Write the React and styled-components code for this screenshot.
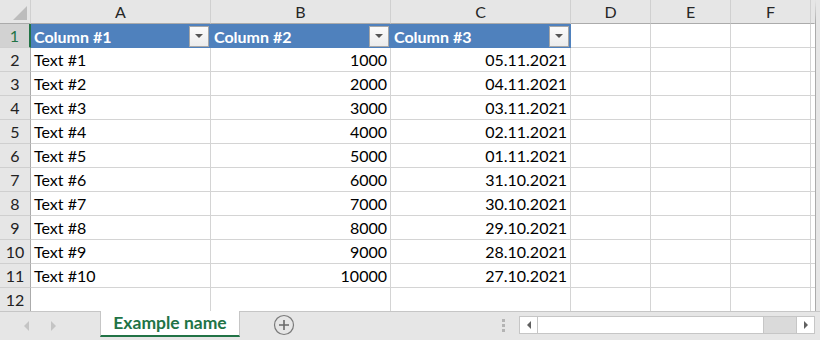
import React from "react";
import styled, { createGlobalStyle } from "styled-components";

const GlobalStyle = createGlobalStyle`
  html, body {
    margin: 0;
    padding: 0;
    background: #ffffff;
  }
  body {
    font-family: Lato, "Open Sans", "Liberation Sans", sans-serif;
    color: #000;
  }
`;

const Window = styled.div`
  width: 820px;
  height: 340px;
  display: flex;
  flex-direction: column;
  overflow: hidden;
  background: #ffffff;
`;

const SheetArea = styled.div`
  display: flex;
  height: 312px;
`;

const Grid = styled.div`
  display: grid;
  grid-template-columns: 31px 180px 180px 180px 80px 80px 80px 4px;
  grid-auto-rows: 24px;
  width: 815px;
`;

const VScroll = styled.div`
  width: 5px;
  border-left: 1px solid #ababab;
  border-top: 23px solid #e6e6e6;
  background: #e6e6e6;
  box-sizing: border-box;
`;

const Corner = styled.div`
  position: relative;
  background: #e6e6e6;
  border-right: 1px solid #d0d0d0;
  border-bottom: 1px solid #ababab;
  box-sizing: border-box;

  &::after {
    content: "";
    position: absolute;
    right: 3px;
    bottom: 3px;
    width: 0;
    height: 0;
    border-left: 14px solid transparent;
    border-bottom: 14px solid #bdbdbd;
  }
`;

const ColHead = styled.div`
  display: flex;
  align-items: center;
  justify-content: center;
  background: #e6e6e6;
  color: #262626;
  font-size: 16px;
  border-right: 1px solid ${(p) => (p.$last ? "#e6e6e6" : "#d0d0d0")};
  border-bottom: 1px solid #ababab;
  box-sizing: border-box;
`;

const RowHead = styled.div`
  display: flex;
  align-items: center;
  justify-content: center;
  font-size: 16px;
  background: ${(p) => (p.$active ? "#d2d2d2" : "#e6e6e6")};
  color: ${(p) => (p.$active ? "#217346" : "#222")};
  border-right: ${(p) => (p.$active ? "2px solid #217346" : "1px solid #ababab")};
  border-bottom: 1px solid #cfcfcf;
  box-sizing: border-box;
`;

const Cell = styled.div`
  display: flex;
  align-items: center;
  justify-content: ${(p) => (p.$right ? "flex-end" : "flex-start")};
  padding: 0 3px 0 3px;
  font-size: 16px;
  color: #000;
  border-right: 1px solid ${(p) => (p.$filler ? "#fff" : "#d4d4d4")};
  border-bottom: 1px solid #d4d4d4;
  box-sizing: border-box;
  white-space: nowrap;
`;

const TableHead = styled.div`
  display: flex;
  align-items: center;
  justify-content: space-between;
  padding: 0 1px 0 3px;
  background: #4f81bd;
  color: #ffffff;
  font-weight: 700;
  font-size: 16px;
  border-right: 1px solid #4f81bd;
  box-sizing: border-box;
`;

const FilterButton = styled.div`
  width: 20px;
  height: 21px;
  box-sizing: border-box;
  border: 1px solid #a6a6a6;
  background: linear-gradient(#fbfbfb, #ececec);
  display: flex;
  align-items: center;
  justify-content: center;

  &::after {
    content: "";
    width: 0;
    height: 0;
    border-left: 4px solid transparent;
    border-right: 4px solid transparent;
    border-top: 4px solid #555;
  }
`;

const TabBar = styled.div`
  flex: 1;
  display: flex;
  align-items: flex-start;
  background: #e6e6e6;
  border-top: 1px solid #c6c6c6;
  margin-top: -1px;
`;

const NavArea = styled.div`
  width: 100px;
  height: 27px;
  display: flex;
  align-items: center;
  gap: 22px;
  padding-left: 24px;
  box-sizing: border-box;
`;

const NavArrow = styled.div`
  width: 0;
  height: 0;
  border-top: 5px solid transparent;
  border-bottom: 5px solid transparent;
  ${(p) =>
    p.$dir === "left"
      ? "border-right: 5px solid #c4c4c4;"
      : "border-left: 5px solid #c4c4c4;"}
`;

const Tab = styled.div`
  width: 140px;
  height: 26px;
  margin-top: -1px;
  box-sizing: border-box;
  background: #ffffff;
  border-left: 1px solid #c6c6c6;
  border-right: 1px solid #c6c6c6;
  border-bottom: 2px solid #217346;
  color: #217346;
  font-weight: 700;
  font-size: 17.5px;
  display: flex;
  align-items: center;
  justify-content: center;
  padding-bottom: 2px;
`;

const AddSheet = styled.div`
  margin-left: 33px;
  margin-top: 2px;
  width: 22px;
  height: 22px;
  display: flex;
`;

const Spacer = styled.div`
  flex: 1;
`;

const Grip = styled.div`
  display: flex;
  flex-direction: column;
  gap: 2px;
  margin-top: 7px;
  margin-right: 14px;

  & > span {
    width: 3px;
    height: 3px;
    background: #b4b4b4;
  }
`;

const HScroll = styled.div`
  width: 296px;
  height: 18px;
  margin-top: 4px;
  margin-right: 5px;
  display: flex;
  background: #dadada;
  border: 1px solid #c6c6c6;
  box-sizing: border-box;
`;

const ScrollBtn = styled.div`
  width: 18px;
  height: 100%;
  box-sizing: border-box;
  background: #ffffff;
  border-${(p) => (p.$dir === "left" ? "right" : "left")}: 1px solid #c6c6c6;
  display: flex;
  align-items: center;
  justify-content: center;

  &::after {
    content: "";
    width: 0;
    height: 0;
    border-top: 4px solid transparent;
    border-bottom: 4px solid transparent;
    ${(p) =>
      p.$dir === "left"
        ? "border-right: 4px solid #606060;"
        : "border-left: 4px solid #606060;"}
  }
`;

const Thumb = styled.div`
  width: 226px;
  height: 100%;
  background: #ffffff;
  border-right: 1px solid #c6c6c6;
  box-sizing: border-box;
`;

const Track = styled.div`
  flex: 1;
`;

const columns = ["A", "B", "C", "D", "E", "F"];

const rows = [
  ["Text #1", "1000", "05.11.2021"],
  ["Text #2", "2000", "04.11.2021"],
  ["Text #3", "3000", "03.11.2021"],
  ["Text #4", "4000", "02.11.2021"],
  ["Text #5", "5000", "01.11.2021"],
  ["Text #6", "6000", "31.10.2021"],
  ["Text #7", "7000", "30.10.2021"],
  ["Text #8", "8000", "29.10.2021"],
  ["Text #9", "9000", "28.10.2021"],
  ["Text #10", "10000", "27.10.2021"],
];

function PlusIcon() {
  return (
    <svg width="22" height="22" viewBox="0 0 22 22">
      <circle cx="11" cy="11" r="9.5" fill="none" stroke="#7a7a7a" strokeWidth="1.2" />
      <path d="M11 6v10M6 11h10" stroke="#6a6a6a" strokeWidth="1.6" />
    </svg>
  );
}

function App() {
  return (
    <Window>
      <GlobalStyle />
      <SheetArea>
        <Grid>
          <Corner />
          {columns.map((c) => (
            <ColHead key={c}>{c}</ColHead>
          ))}
          <ColHead $last />

          <RowHead $active>1</RowHead>
          {["Column #1", "Column #2", "Column #3"].map((h) => (
            <TableHead key={h}>
              <span>{h}</span>
              <FilterButton />
            </TableHead>
          ))}
          <Cell />
          <Cell />
          <Cell />
          <Cell $filler />

          {rows.map((r, i) => (
            <React.Fragment key={i}>
              <RowHead>{i + 2}</RowHead>
              <Cell>{r[0]}</Cell>
              <Cell $right>{r[1]}</Cell>
              <Cell $right>{r[2]}</Cell>
              <Cell />
              <Cell />
              <Cell />
              <Cell $filler />
            </React.Fragment>
          ))}

          <RowHead>12</RowHead>
          <Cell />
          <Cell />
          <Cell />
          <Cell />
          <Cell />
          <Cell />
          <Cell $filler />
        </Grid>
        <VScroll />
      </SheetArea>
      <TabBar>
        <NavArea>
          <NavArrow $dir="left" />
          <NavArrow $dir="right" />
        </NavArea>
        <Tab>Example name</Tab>
        <AddSheet>
          <PlusIcon />
        </AddSheet>
        <Spacer />
        <Grip>
          <span />
          <span />
          <span />
        </Grip>
        <HScroll>
          <ScrollBtn $dir="left" />
          <Thumb />
          <Track />
          <ScrollBtn $dir="right" />
        </HScroll>
      </TabBar>
    </Window>
  );
}

export default App;
